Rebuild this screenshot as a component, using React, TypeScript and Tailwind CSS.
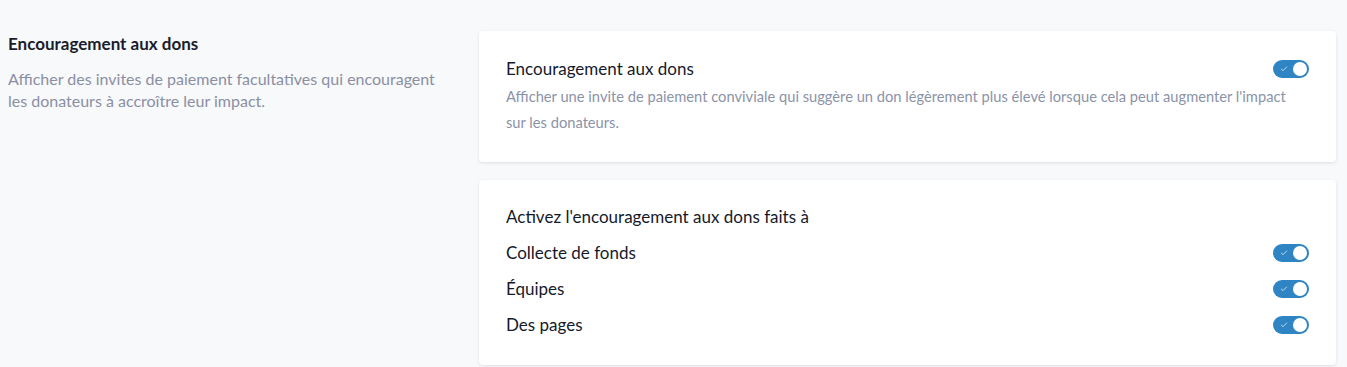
import { Check } from 'lucide-react';

function Toggle() {
  return (
    <div className="relative flex h-[18px] w-[36px] shrink-0 items-center rounded-full bg-[#2f84c3]">
      <Check size={8} strokeWidth={3} className="absolute left-[7px] text-white/70" />
      <div className="absolute right-[2px] h-[14px] w-[14px] rounded-full bg-white" />
    </div>
  );
}

const targets = ['Collecte de fonds', 'Équipes', 'Des pages'];

export default function App() {
  return (
    <div className="min-h-[367px] w-full bg-[#f8f9fb] font-['Lato',sans-serif]">
      <div className="flex gap-[31px] pt-[31px] pl-[8px] pr-[11px]">
        <div className="w-[440px] shrink-0 pt-[2px]">
          <h2 className="text-[17px] font-bold leading-[22px] text-[#1a1d2b]">Encouragement aux dons</h2>
          <p className="mt-[13px] text-[16px] leading-[22px] text-[#8a8fa3]">
            Afficher des invites de paiement facultatives qui encouragent les donateurs à accroître leur impact.
          </p>
        </div>

        <div className="flex flex-1 flex-col gap-[18px]">
          <div className="rounded-[4px] bg-white px-[27px] pt-[26px] pb-[27px] shadow-[0_1px_3px_rgba(30,40,70,0.12)]">
            <div className="flex items-center justify-between">
              <h3 className="text-[17px] leading-[24px] text-[#151a2b]">Encouragement aux dons</h3>
              <Toggle />
            </div>
            <p className="mt-[2px] pr-[10px] text-[14.7px] leading-[26px] text-[#8b93a8]">
              Afficher une invite de paiement conviviale qui suggère un don légèrement plus élevé lorsque cela peut augmenter l'impact sur les donateurs.
            </p>
          </div>

          <div className="rounded-[4px] bg-white px-[27px] pt-[24px] pb-[27px] shadow-[0_1px_3px_rgba(30,40,70,0.12)]">
            <div className="text-[17px] leading-[26px] text-[#151a2b]">Activez l'encouragement aux dons faits à</div>
            <div className="mt-[10px] flex flex-col gap-[10px]">
              {targets.map((t) => (
                <div key={t} className="flex h-[26px] items-center justify-between">
                  <span className="text-[17px] text-[#151a2b]">{t}</span>
                  <Toggle />
                </div>
              ))}
            </div>
          </div>
        </div>
      </div>
    </div>
  );
}
